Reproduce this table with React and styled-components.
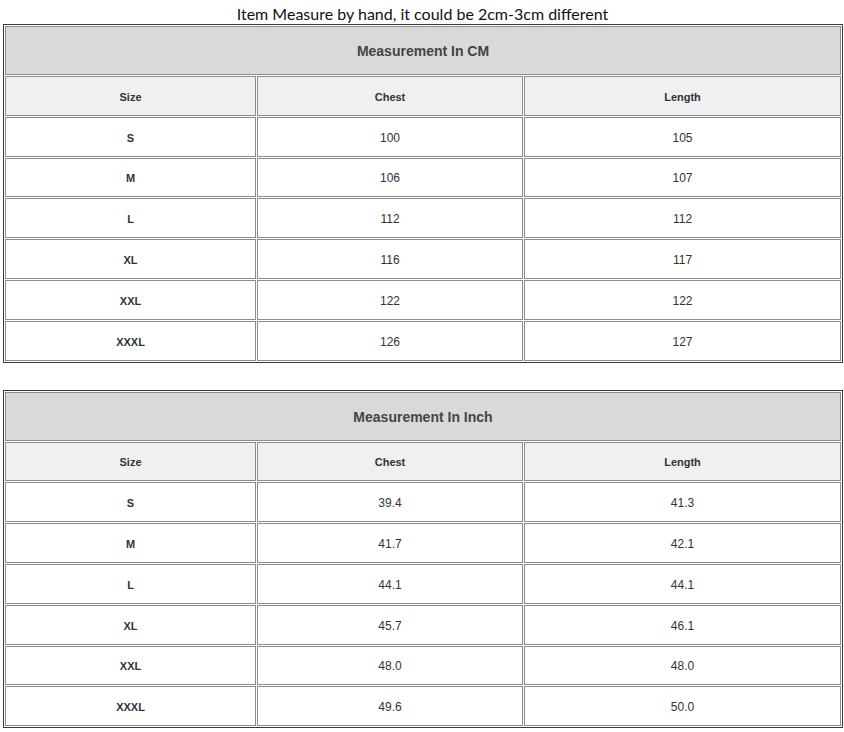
import React from 'react';
import styled, { createGlobalStyle } from 'styled-components';

const cm = [
    ['S', '100', '105'],
    ['M', '106', '107'],
    ['L', '112', '112'],
    ['XL', '116', '117'],
    ['XXL', '122', '122'],
    ['XXXL', '126', '127'],
];

const inch = [
    ['S', '39.4', '41.3'],
    ['M', '41.7', '42.1'],
    ['L', '44.1', '44.1'],
    ['XL', '45.7', '46.1'],
    ['XXL', '48.0', '48.0'],
    ['XXXL', '49.6', '50.0'],
];

const GlobalStyle = createGlobalStyle`
    body {
        margin: 0;
        background: #fff;
        font-family: "Liberation Sans", Arial, sans-serif;
    }
`;

const Page = styled.div`
    padding: 0 2px 0 3px;
`;

const Caption = styled.div`
    height: 24px;
    line-height: 28px;
    text-align: center;
    font-family: Lato, "Open Sans", sans-serif;
    font-size: 16px;
    color: #111;
`;

const Table = styled.table`
    width: 840px;
    table-layout: fixed;
    border: 1px solid #3a3a3a;
    border-collapse: separate;
    border-spacing: 1px;
    margin-top: ${(p) => (p.$gap ? '27px' : '0')};
`;

const TitleCell = styled.th`
    height: 49px;
    box-sizing: border-box;
    padding: 1px 0 0;
    border: 1px solid #8c8c8c;
    background: #d9d9d9;
    color: #444;
    font-size: 14px;
    font-weight: bold;
`;

const HeadCell = styled.th`
    height: 39.8px;
    box-sizing: border-box;
    padding: 2px 0 0;
    border: 1px solid #8c8c8c;
    background: #f0f0f0;
    color: #333;
    font-size: 11px;
    font-weight: bold;
`;

const Cell = styled.td`
    height: 39.8px;
    box-sizing: border-box;
    padding: 2px 0 0;
    border: 1px solid #8c8c8c;
    background: #fff;
    text-align: center;
    color: #333;
    font-size: ${(p) => (p.$bold ? '11px' : '12px')};
    font-weight: ${(p) => (p.$bold ? 'bold' : 'normal')};
`;

const SizeTable = ({ title, rows, gap }) => (
    <Table $gap={gap}>
        <colgroup>
            <col style={{ width: 251 }} />
            <col style={{ width: 266 }} />
            <col style={{ width: 317 }} />
        </colgroup>
        <thead>
            <tr>
                <TitleCell colSpan={3}>{title}</TitleCell>
            </tr>
            <tr>
                <HeadCell>Size</HeadCell>
                <HeadCell>Chest</HeadCell>
                <HeadCell>Length</HeadCell>
            </tr>
        </thead>
        <tbody>
            {rows.map((r) => (
                <tr key={r[0]}>
                    <Cell $bold>{r[0]}</Cell>
                    <Cell>{r[1]}</Cell>
                    <Cell>{r[2]}</Cell>
                </tr>
            ))}
        </tbody>
    </Table>
);

const App = () => (
    <Page>
        <GlobalStyle />
        <Caption>Item Measure by hand, it could be 2cm-3cm different</Caption>
        <SizeTable title="Measurement In CM" rows={cm} />
        <SizeTable title="Measurement In Inch" rows={inch} gap />
    </Page>
);

export default App;
